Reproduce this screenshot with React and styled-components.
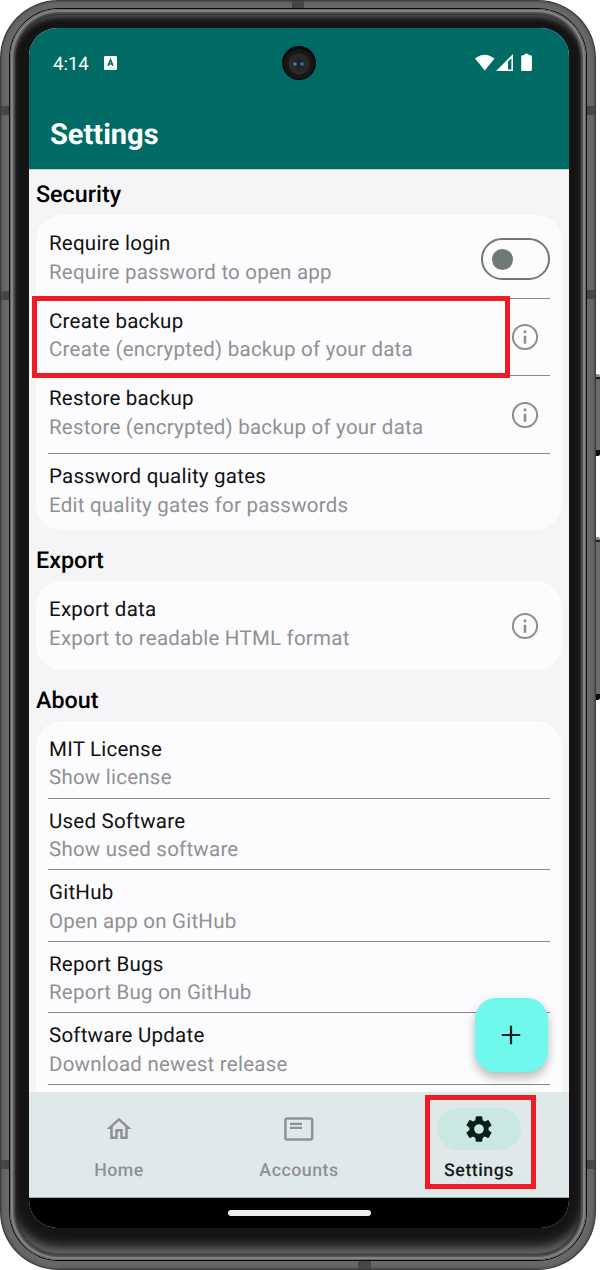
import React from "react";
import styled, { createGlobalStyle, css } from "styled-components";

const GlobalStyle = createGlobalStyle`
  *, *::before, *::after { box-sizing: border-box; }
  body {
    margin: 0;
    background: #fff;
    font-family: Roboto, "Liberation Sans", sans-serif;
    text-rendering: geometricPrecision;
    overflow: hidden;
  }
`;

const Device = styled.div`
  display: flex;
  width: 600px;
  height: 1270px;
  overflow: hidden;
`;

/* Metal frame; the small dark bands are the antenna breaks. */
const Frame = styled.div`
  --band: linear-gradient(#464646, #464646);
  flex: none;
  width: 596px;
  height: 1270px;
  padding: 8px 9px 9px;
  border-radius: 58px;
  background:
    var(--band) 0 106px / 9px 9px no-repeat,
    var(--band) 0 291px / 9px 9px no-repeat,
    var(--band) 0 1160px / 9px 9px no-repeat,
    var(--band) 100% 106px / 9px 9px no-repeat,
    var(--band) 100% 290px / 9px 9px no-repeat,
    var(--band) 100% 1160px / 9px 9px no-repeat,
    var(--band) 292px 0 / 12px 8px no-repeat,
    var(--band) 358px 100% / 13px 9px no-repeat,
    #686868;
  box-shadow: inset 0 0 2px 1px #333, inset 0 0 5px 1px #555;
`;

const Rim = styled.div`
  height: 100%;
  padding: 1px;
  border-radius: 50px;
  background: #0c0c0c;
`;

const Bezel = styled.div`
  height: 100%;
  padding: 19px;
  border-radius: 49px;
  background: #141414;
  box-shadow: inset 0 0 0 1px #666, inset 0 0 1px 3px #858585,
    inset 0 0 1px 5px #505050, inset 0 0 2px 6px #2a2a2a,
    inset 0 -14px 14px -3px #808080, inset 0 8px 6px -1px #7a7a7a;
`;

const Screen = styled.div`
  position: relative;
  display: flex;
  flex-direction: column;
  width: 540px;
  height: 1200px;
  border-radius: 28px;
  overflow: hidden;
  background: #f5f5f7;
`;

const SideButtons = styled.div`
  display: flex;
  flex-direction: column;
  gap: 81px;
  width: 4px;
  padding-top: 374px;
`;

const SideButton = styled.span`
  height: ${(p) => (p.$long ? 163 : 82)}px;
  border-radius: 0 2px 2px 0;
  background: linear-gradient(#8d8d8d 0 3px, #222 3px 5px, #6b6b6b 5px calc(100% - 6px), #0d0d0d calc(100% - 6px));
`;

const Header = styled.header`
  flex: none;
  height: 142px;
  background: #006b65;
  border-bottom: 1px solid #b9d0d0;
  color: #fff;
`;

const StatusBar = styled.div`
  display: grid;
  grid-template-columns: 229px 34px 1fr;
  align-items: center;
  height: 70px;
  padding: 0 35px 0 24px;
`;

const StatusLeft = styled.div`
  display: flex;
  align-items: center;
  gap: 15px;
  svg { display: block; }
`;

const Clock = styled.span`
  width: 36px;
  padding-top: 2px;
  font-size: 18.5px;
  line-height: 22px;
`;

const StatusRight = styled.div`
  display: flex;
  justify-content: flex-end;
`;

const Camera = styled.span`
  height: 34px;
  border-radius: 50%;
  background:
    radial-gradient(circle at 13px 18px, #4f7d87 0 1px, transparent 2.5px),
    radial-gradient(circle at 20px 18px, #5366a8 0 1px, transparent 2.5px),
    radial-gradient(circle at 17px 18px, #202124 0 5px, #292929 6px 10px, #171717 11px 14px, #070707 16px);
`;

const Title = styled.h1`
  margin: 0;
  padding: 20px 21px 0;
  font-size: 29px;
  font-weight: 700;
  line-height: 34px;
`;

const Content = styled.main`
  flex: 1;
  min-height: 0;
  overflow: hidden;
  padding: 3px 7px 0;
`;

const Section = styled.section`
  & + & { margin-top: 9px; }
`;

const SectionTitle = styled.h2`
  margin: 0;
  padding: 1px 0;
  font-size: 23.3px;
  font-weight: 500;
  line-height: 40px;
  color: #000;
`;

const Card = styled.div`
  padding: 6px 12px 4.8px;
  border-radius: 26px;
  background: #fcfcff;
`;

const marker = css`
  position: relative;
  &::before {
    content: "";
    position: absolute;
    inset: ${(p) => p.$marker};
    border: 5px solid #ee1c25;
  }
`;

const Row = styled.div`
  display: flex;
  align-items: center;
  justify-content: space-between;
  height: ${(p) => (p.$tall ? 77.7 : 71.6)}px;
  border-bottom: 1px solid #88888b;
  &:last-child { border-bottom-color: transparent; }
  ${(p) => p.$marker && marker}
`;

const RowText = styled.div`
  align-self: flex-start;
  padding: 9px 0 0 1px;
  font-size: 20.5px;
  line-height: 28.5px;
  letter-spacing: 0.23px;
  white-space: nowrap;
`;

const Name = styled.div`
  color: #111;
`;

const Detail = styled.div`
  color: #919194;
`;

const Switch = styled.span`
  display: flex;
  align-items: center;
  width: 69px;
  height: 42px;
  padding-left: 8.5px;
  border: 2.5px solid #6f7977;
  border-radius: 21px;
  &::after {
    content: "";
    width: 21px;
    height: 21px;
    border-radius: 50%;
    background: #6f7977;
  }
`;

const InfoSlot = styled.span`
  display: flex;
  margin-right: 9px;
`;

const Nav = styled.nav`
  flex: none;
  display: flex;
  height: 106px;
  padding-top: 16px;
  background: #e0e9e9;
  border-bottom: 1px solid #9aa8a6;
`;

const NavItem = styled.div`
  flex: 1;
  display: flex;
  flex-direction: column;
  align-items: center;
  gap: 10px;
  color: #919194;
  font-size: 17.8px;
  font-weight: 500;
  line-height: 22px;
  letter-spacing: 0.5px;
  ${(p) => p.$active && css`color: #171d1c;`}
  ${(p) => p.$marker && marker}
`;

const NavIcon = styled.span`
  display: flex;
  align-items: center;
  justify-content: center;
  width: 84px;
  height: 42px;
  border-radius: 21px;
  ${(p) => p.$active && css`background: #cbe7e3; color: #051f1d;`}
`;

const GestureBar = styled.div`
  flex: none;
  display: flex;
  justify-content: center;
  height: 30px;
  padding-top: 12px;
  background: #000;
  &::after {
    content: "";
    width: 143px;
    height: 6px;
    border-radius: 3px;
    background: #ececec;
  }
`;

const Fab = styled.button`
  position: absolute;
  right: 21px;
  bottom: 156.5px;
  display: flex;
  align-items: center;
  justify-content: center;
  width: 73.5px;
  height: 73.5px;
  padding: 0;
  border: 0;
  border-radius: 21px;
  background: #70f7ee;
  box-shadow: 0 6px 10px rgba(0, 0, 0, 0.22), 0 1px 14px rgba(0, 0, 0, 0.07);
`;

const InfoIcon = () => (
  <InfoSlot>
    <svg width="32" height="32" viewBox="0 0 32 32">
      <circle cx="16" cy="16" r="12.1" fill="none" stroke="#8e8e91" strokeWidth="2" />
      <path d="M14.7 9.6h2.6v2.6h-2.6zM14.7 14.8h2.6v8h-2.6z" fill="#8e8e91" />
    </svg>
  </InfoSlot>
);

const HomeIcon = () => (
  <svg width="30" height="30" viewBox="0 0 24 24" fill="currentColor">
    <path d="M12 5.69l5 4.5V18h-2v-6H9v6H7v-7.81l5-4.5M12 3L2 12h3v8h6v-6h2v6h6v-8h3L12 3z" />
  </svg>
);

const AccountsIcon = () => (
  <svg width="32" height="32" viewBox="0 0 32 32">
    <rect x="2.4" y="5.4" width="26.8" height="21.2" rx="1.8" fill="none" stroke="currentColor" strokeWidth="2.5" />
    <path d="M7 9.7h12V12H7zM7 13.7h12V16H7z" fill="currentColor" />
  </svg>
);

const GearIcon = () => (
  <svg width="32" height="32" viewBox="0 0 24 24" fill="currentColor">
    <path d="M19.14 12.94c.04-.3.06-.61.06-.94 0-.32-.02-.64-.07-.94l2.03-1.58a.49.49 0 0 0 .12-.61l-1.92-3.32a.488.488 0 0 0-.59-.22l-2.39.96c-.5-.38-1.03-.7-1.62-.94l-.36-2.54a.484.484 0 0 0-.48-.41h-3.84c-.24 0-.43.17-.47.41l-.36 2.54c-.59.24-1.13.57-1.62.94l-2.39-.96c-.22-.08-.47 0-.59.22L2.74 8.87c-.12.21-.08.47.12.61l2.03 1.58c-.05.3-.09.63-.09.94s.02.64.07.94l-2.03 1.58a.49.49 0 0 0-.12.61l1.92 3.32c.12.22.37.29.59.22l2.39-.96c.5.38 1.03.7 1.62.94l.36 2.54c.05.24.24.41.48.41h3.84c.24 0 .44-.17.47-.41l.36-2.54c.59-.24 1.13-.56 1.62-.94l2.39.96c.22.08.47 0 .59-.22l1.92-3.32c.12-.22.07-.47-.12-.61l-2.01-1.58zM12 15.6c-1.98 0-3.6-1.62-3.6-3.6s1.62-3.6 3.6-3.6 3.6 1.62 3.6 3.6-1.62 3.6-3.6 3.6z" />
  </svg>
);

const KeyboardBadge = () => (
  <svg width="13" height="14" viewBox="0 0 13 14">
    <rect width="13" height="14" rx="1.2" fill="#fff" />
    <path d="M4 9.8 6.5 3.8 9 9.8M4.8 8.1h3.4" fill="none" stroke="#006b65" strokeWidth="1.5" />
    <path d="M6.5 12.3h5" stroke="#8fb9b5" strokeWidth="0.8" strokeDasharray="1.2 .6" />
  </svg>
);

const StatusGlyphs = () => (
  <svg width="60" height="20" viewBox="0 0 60 20" fill="#fff">
    <path d="M1 5.6Q10.5-2.2 20.5 5.6L10.8 17.5z" />
    <path d="M22 18 39 1V18zM34 16.4h3.4V5.2L34 8.6z" fillRule="evenodd" />
    <path d="M50.5 .8h4v1.4h2.2q1.2 0 1.2 1.2v13.4q0 1.2-1.2 1.2h-8.3q-1.2 0-1.2-1.2V3.4q0-1.2 1.2-1.2h2.1z" />
  </svg>
);

const sections = [
  {
    title: "Security",
    rows: [
      { name: "Require login", detail: "Require password to open app", control: "switch" },
      {
        name: "Create backup",
        detail: "Create (encrypted) backup of your data",
        control: "info",
        marker: "-2.7px 40px -2.6px -16px",
      },
      { name: "Restore backup", detail: "Restore (encrypted) backup of your data", control: "info" },
      { name: "Password quality gates", detail: "Edit quality gates for passwords" },
    ],
  },
  {
    title: "Export",
    rows: [{ name: "Export data", detail: "Export to readable HTML format", control: "info" }],
  },
  {
    title: "About",
    rows: [
      { name: "MIT License", detail: "Show license" },
      { name: "Used Software", detail: "Show used software" },
      { name: "GitHub", detail: "Open app on GitHub" },
      { name: "Report Bugs", detail: "Report Bug on GitHub" },
      { name: "Software Update", detail: "Download newest release" },
      { name: "", detail: "" },
    ],
  },
];

const tabs = [
  { label: "Home", Icon: HomeIcon },
  { label: "Accounts", Icon: AccountsIcon },
  { label: "Settings", Icon: GearIcon, active: true, marker: "-13px 33px 8px 36px" },
];

export default function App() {
  return (
    <Device>
      <GlobalStyle />
      <Frame>
        <Rim>
          <Bezel>
            <Screen>
              <Header>
                <StatusBar>
                  <StatusLeft>
                    <Clock>4:14</Clock>
                    <KeyboardBadge />
                  </StatusLeft>
                  <Camera />
                  <StatusRight>
                    <StatusGlyphs />
                  </StatusRight>
                </StatusBar>
                <Title>Settings</Title>
              </Header>
              <Content>
                {sections.map((section) => (
                  <Section key={section.title}>
                    <SectionTitle>{section.title}</SectionTitle>
                    <Card>
                      {section.rows.map((row) => (
                        <Row key={row.name} $tall={Boolean(row.control)} $marker={row.marker}>
                          <RowText>
                            <Name>{row.name}</Name>
                            <Detail>{row.detail}</Detail>
                          </RowText>
                          {row.control === "switch" && <Switch />}
                          {row.control === "info" && <InfoIcon />}
                        </Row>
                      ))}
                    </Card>
                  </Section>
                ))}
              </Content>
              <Nav>
                {tabs.map(({ label, Icon, active, marker: inset }) => (
                  <NavItem key={label} $active={active} $marker={inset}>
                    <NavIcon $active={active}>
                      <Icon />
                    </NavIcon>
                    {label}
                  </NavItem>
                ))}
              </Nav>
              <GestureBar />
              <Fab aria-label="Add">
                <svg width="20" height="20" viewBox="0 0 20 20">
                  <path d="M10 .8v18.4M.8 10h18.4" stroke="#06211f" strokeWidth="2.2" />
                </svg>
              </Fab>
            </Screen>
          </Bezel>
        </Rim>
      </Frame>
      <SideButtons>
        <SideButton />
        <SideButton $long />
      </SideButtons>
    </Device>
  );
}
